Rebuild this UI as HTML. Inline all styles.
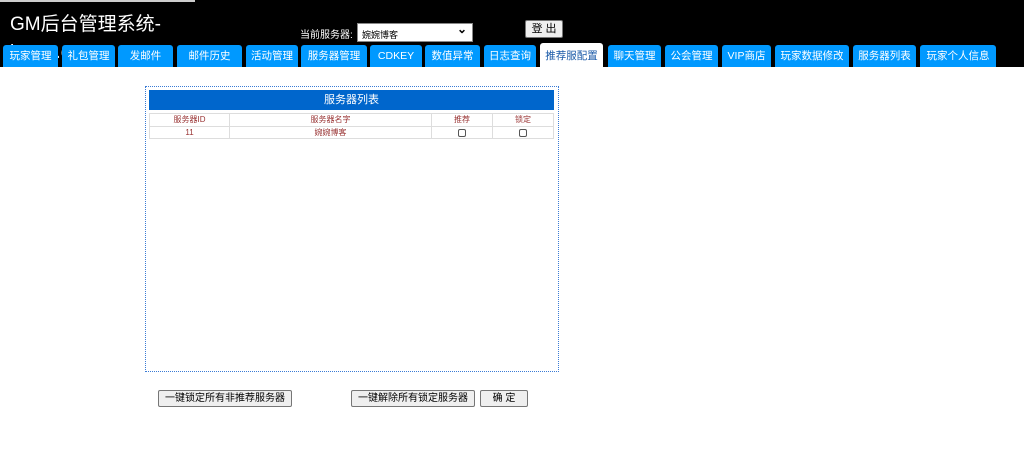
<!DOCTYPE html>
<html><head><meta charset="utf-8"><style>
*{box-sizing:border-box;margin:0;padding:0}
body{width:1024px;height:468px;background:#fff;font-family:"Liberation Sans","Noto Sans CJK SC",sans-serif;position:relative;overflow:hidden}
.hd{position:absolute;left:0;top:0;width:1024px;height:67px;background:#000;overflow:hidden}
.topline{position:absolute;left:0;top:0;width:195px;height:2px;background:#ccc}
.title{position:absolute;left:10px;top:11px;color:#fff;font-size:19px;line-height:28px;width:200px}
.lbl{position:absolute;left:300px;top:26px;color:#fff;font-size:10px}
.sel{position:absolute;left:357px;top:23px;width:116px;height:19px;background:#fff;border:1px solid #888;font-size:9px;padding:4px 4px;color:#000}
.sel:after{content:"⌄";position:absolute;right:5px;top:-2px;font-size:12px;font-weight:bold}
.btn{position:absolute;background:#efefef;border:1px solid #767676;border-radius:2px;font-size:10px;text-align:center;color:#000}
.tab{position:absolute;z-index:2;top:45px;height:24px;background:#0099ff;color:#fff;font-size:10.5px;text-align:center;line-height:22px;border-radius:3px 3px 0 0}
.tab.on{background:#fff;color:#1a5aa8;top:43px;height:26px;line-height:26px}
.panel{position:absolute;left:145px;top:86px;width:414px;height:286px;border:1px dotted #3a7bd5}
.ph{position:absolute;left:3px;top:3px;width:405px;height:20px;background:#0066cc;color:#fff;font-size:11px;text-align:center;line-height:20px}
table{position:absolute;left:3px;top:26px;width:405px;border-collapse:collapse;font-size:8px;color:#993333}
td{border:1px solid #ddd;height:12.5px;text-align:center;line-height:11px}
.cb{display:inline-block;width:8px;height:8px;border:1px solid #555;border-radius:2px;vertical-align:middle}
</style></head><body>
<div class="hd">
<div class="topline"></div>
<div class="title">GM后台管理系统-<br>kutus.cn</div>
<div class="lbl">当前服务器:</div>
<div class="sel">婉婉博客</div>
<div class="btn" style="left:525px;top:20px;width:38px;height:18px;line-height:16px;font-size:11px">登 出</div>
<div class="tab" style="left:3px;width:55px">玩家管理</div>
<div class="tab" style="left:62px;width:53px">礼包管理</div>
<div class="tab" style="left:118px;width:55px">发邮件</div>
<div class="tab" style="left:177px;width:65px">邮件历史</div>
<div class="tab" style="left:246px;width:52px">活动管理</div>
<div class="tab" style="left:301px;width:66px">服务器管理</div>
<div class="tab" style="left:370px;width:52px">CDKEY</div>
<div class="tab" style="left:425px;width:55px">数值异常</div>
<div class="tab" style="left:484px;width:52px">日志查询</div>
<div class="tab on" style="left:540px;width:63px">推荐服配置</div>
<div class="tab" style="left:608px;width:53px">聊天管理</div>
<div class="tab" style="left:665px;width:53px">公会管理</div>
<div class="tab" style="left:722px;width:49px">VIP商店</div>
<div class="tab" style="left:775px;width:74px">玩家数据修改</div>
<div class="tab" style="left:853px;width:63px">服务器列表</div>
<div class="tab" style="left:920px;width:76px">玩家个人信息</div>
</div>
<div class="panel">
<div class="ph">服务器列表</div>
<table>
<tr><td style="width:80px">服务器ID</td><td style="width:202px">服务器名字</td><td style="width:61px">推荐</td><td>锁定</td></tr>
<tr><td>11</td><td>婉婉博客</td><td><span class="cb"></span></td><td><span class="cb"></span></td></tr>
</table>
</div>
<div class="btn" style="left:158px;top:390px;width:134px;height:17px;line-height:15px">一键锁定所有非推荐服务器</div>
<div class="btn" style="left:351px;top:390px;width:124px;height:17px;line-height:15px">一键解除所有锁定服务器</div>
<div class="btn" style="left:480px;top:390px;width:48px;height:17px;line-height:15px">确 定</div>
</body></html>
